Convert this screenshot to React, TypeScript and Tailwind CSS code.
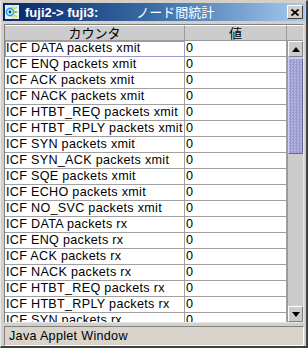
import React from 'react';

const ROWS = [
  'ICF DATA packets xmit',
  'ICF ENQ packets xmit',
  'ICF ACK packets xmit',
  'ICF NACK packets xmit',
  'ICF HTBT_REQ packets xmit',
  'ICF HTBT_RPLY packets xmit',
  'ICF SYN packets xmit',
  'ICF SYN_ACK packets xmit',
  'ICF SQE packets xmit',
  'ICF ECHO packets xmit',
  'ICF NO_SVC packets xmit',
  'ICF DATA packets rx',
  'ICF ENQ packets rx',
  'ICF ACK packets rx',
  'ICF NACK packets rx',
  'ICF HTBT_REQ packets rx',
  'ICF HTBT_RPLY packets rx',
  'ICF SYN packets rx',
];

const FONT = 'font-["Liberation_Sans","Noto_Sans_CJK_JP",sans-serif]';

function AppIcon() {
  return (
    <svg width="14" height="14" viewBox="0 0 14 14" aria-hidden="true">
      <rect x="0" y="0" width="14" height="14" fill="#e8f0f8" />
      <circle cx="5" cy="7" r="3.6" fill="none" stroke="#20a0e0" strokeWidth="1.6" />
      <circle cx="5" cy="7" r="1.4" fill="#1030a0" />
      <path d="M8 7H13M8 4.5L12 2M8 9.5L12 12M7 3L9 0.5M7 11L9 13.5" stroke="#c8d820" strokeWidth="1.2" />
      <path d="M9 7H12" stroke="#40b040" strokeWidth="1" />
    </svg>
  );
}

function Arrow({ up }: { up?: boolean }) {
  return (
    <svg width="8" height="5" viewBox="0 0 8 5" aria-hidden="true">
      <path d={up ? 'M0 5H8L4 0Z' : 'M0 0H8L4 5Z'} fill="#000" />
    </svg>
  );
}

export default function App() {
  return (
    <div className={`w-[308px] h-[348px] bg-[#d4d0c8] flex flex-col border-l border-t border-l-[#e8e8e8] border-t-[#d4d0c8] border-r-2 border-b-2 border-r-[#404040] border-b-[#404040] ${FONT}`}>
      <div className="mt-[2px] ml-[2px] mr-[1px] h-[18px] flex items-center bg-gradient-to-r from-[#0a246a] via-[#3a6ea5] to-[#a6caf0] text-white text-[13px] leading-none">
        <div className="ml-[2px] mr-[6px] flex"><AppIcon /></div>
        <span className="font-bold">fuji2-&gt; fuji3:</span>
        <span className="ml-[38px] text-[13px]">ノード間統計</span>
        <div className="ml-auto mr-[2px] w-[16px] h-[14px] bg-[#d4d0c8] border border-t-white border-l-white border-r-[#404040] border-b-[#404040] flex items-center justify-center">
          <svg width="8" height="7" viewBox="0 0 8 7" aria-hidden="true">
            <path d="M0.5 0.5L7.5 6.5M7.5 0.5L0.5 6.5" stroke="#000" strokeWidth="1.8" />
          </svg>
        </div>
      </div>

      <div className="mt-[3px] ml-[3px] mr-[2px] h-[299px] border-t border-l border-[#808080] border-b border-r border-b-[#e8e8e8] border-r-[#e8e8e8] flex flex-col overflow-hidden">
        <div className="flex h-[16px] bg-[#cccccc] text-[13px] leading-[15px] text-black">
          <div className="w-[180px] text-center border-r border-b border-[#999999] border-t border-t-white">カウンタ</div>
          <div className="w-[102px] text-center border-r border-b border-[#999999] border-t border-t-white">値</div>
          <div className="w-[16px] border-b border-[#999999] border-t border-t-white"></div>
        </div>
        <div className="flex flex-1 overflow-hidden">
          <div className="w-[282px] bg-white overflow-hidden">
            {ROWS.map((r, i) => (
              <div key={r} className="flex h-[16px] text-[12.6px] leading-[15px] tracking-[0.3px] text-black">
                <div className={`w-[180px] pl-[1px] whitespace-nowrap overflow-hidden border-b border-r border-[#a0a0a0] ${i === 0 ? 'outline outline-1 -outline-offset-1 outline-[#9999cc]' : ''}`}>{r}</div>
                <div className="w-[102px] pl-[1px] border-b border-r border-[#a0a0a0]">0</div>
              </div>
            ))}
          </div>
          <div className="w-[16px] flex flex-col bg-[#cccccc] border-l border-[#999999]">
            <div className="h-[16px] flex items-center justify-center bg-[#cccccc] border border-t-white border-l-white border-r-[#808080] border-b-[#808080]">
              <Arrow up />
            </div>
            <div className="mt-[1px] h-[96px] border border-t-[#ccccff] border-l-[#ccccff] border-r-[#666699] border-b-[#666699] bg-[repeating-conic-gradient(#9999cc_0_25%,#b4b4e0_0_50%)] bg-[length:3px_3px]"></div>
            <div className="flex-1"></div>
            <div className="h-[16px] flex items-center justify-center bg-[#cccccc] border border-t-white border-l-white border-r-[#808080] border-b-[#808080]">
              <Arrow />
            </div>
          </div>
        </div>
      </div>

      <div className="mt-[3px] ml-[3px] mr-[2px] h-[20px] border border-t-[#808080] border-l-[#808080] border-b-white border-r-white bg-[#d4d0c8] bg-[repeating-conic-gradient(#d4d0c8_0_25%,#dcd8d0_0_50%)] bg-[length:2px_2px] flex items-center text-[12.6px] tracking-[0.3px] text-black pl-[4px]">
        Java Applet Window
      </div>
    </div>
  );
}
